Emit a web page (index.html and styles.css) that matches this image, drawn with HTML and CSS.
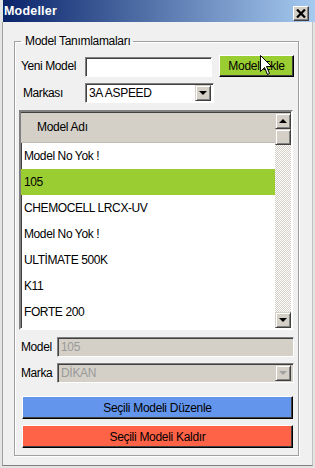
FILE: index.html
```html
<!DOCTYPE html>
<html lang="tr">
<head>
  <meta charset="UTF-8">
  <meta name="viewport" content="width=device-width, initial-scale=1.0">
  <title>Modeller</title>
  <link rel="stylesheet" href="styles.css">
</head>
<body>
  <div class="window">
    <div class="titlebar">
      <span class="title">Modeller</span>
      <span class="close-btn">
        <svg width="10" height="9" viewBox="0 0 10 9"><path d="M1 0.5 L9 8.5 M9 0.5 L1 8.5" stroke="#000" stroke-width="2.2"/></svg>
      </span>
    </div>

    <div class="client">
      <fieldset class="group">
        <legend>Model Tanımlamaları</legend>

        <div class="row row-new">
          <label class="lbl lbl-wide">Yeni Model</label>
          <input type="text" class="field field-new">
          <button class="btn btn-add">Model Ekle</button>
        </div>

        <div class="row row-brand">
          <label class="lbl lbl-wide lbl-indent">Markası</label>
          <div class="combo combo-brand">
            <span class="combo-text">3A ASPEED</span>
            <span class="combo-arrow"><span class="tri-down"></span></span>
          </div>
        </div>

        <!-- model listesi -->
        <div class="grid">
          <div class="grid-body">
            <div class="grid-head">Model Adı</div>
            <div class="grid-row">Model No Yok !</div>
            <div class="grid-row selected">105</div>
            <div class="grid-row">CHEMOCELL LRCX-UV</div>
            <div class="grid-row">Model No Yok !</div>
            <div class="grid-row">ULTİMATE 500K</div>
            <div class="grid-row">K11</div>
            <div class="grid-row">FORTE 200</div>
          </div>
          <div class="scrollbar">
            <span class="sb-btn"><span class="tri-up"></span></span>
            <span class="sb-btn"></span>
            <span class="sb-track"></span>
            <span class="sb-btn"><span class="tri-down"></span></span>
          </div>
        </div>

        <div class="row row-model">
          <label class="lbl lbl-short">Model</label>
          <div class="field field-disabled">105</div>
        </div>

        <div class="row row-marka">
          <label class="lbl lbl-short">Marka</label>
          <div class="combo combo-disabled">
            <span class="combo-text">DİKAN</span>
            <span class="combo-arrow"><span class="tri-down grey"></span></span>
          </div>
        </div>

        <button class="btn btn-wide btn-edit">Seçili Modeli Düzenle</button>
        <button class="btn btn-wide btn-remove">Seçili Modeli Kaldır</button>
      </fieldset>
    </div>

    <svg class="cursor" width="13" height="21" viewBox="0 0 13 21"><path d="M0.5 0.5 L0.5 16.5 L4.5 12.5 L7.5 19.5 L9.5 18.5 L6.5 11.5 L11.5 11.5 Z" fill="#fff" stroke="#000" stroke-width="1"/></svg>
  </div>
</body>
</html>
```

FILE: styles.css
```css
body {
  margin: 0;
  font-family: 'Liberation Sans', Arial, sans-serif;
  font-size: 12px;
  color: #000;
  background-color: #f0f0f0;
}
.window {
  position: relative;
  width: 315px;
  height: 468px;
  box-sizing: border-box;
  padding: 0 2px 2px 2px;
  background-color: #e4e4e4;
  display: flex;
  flex-direction: column;
}
.titlebar {
  height: 22px;
  display: flex;
  align-items: center;
  justify-content: space-between;
  padding: 0 6px 0 1px;
  margin: 0 -2px 0 1px;
  background: linear-gradient(to right, #0a246a, #a6caf0);
}
.title {
  color: #fff;
  font-weight: bold;
  font-size: 12.5px;
  letter-spacing: 0.2px;
}
.close-btn {
  width: 14px;
  height: 13px;
  margin-top: 4px;
  display: flex;
  align-items: center;
  justify-content: center;
  background-color: #d4d0c8;
  border: 1px solid;
  border-color: #fff #404040 #404040 #fff;
  box-shadow: inset -1px -1px #808080;
}
.client {
  flex: 1;
  background-color: #f0f0f0;
  border-left: 1px solid #a0a0a0;
  border-bottom: 1px solid #808080;
  border-right: 1px solid #c0c0c0;
  padding: 0 0 0 11px;
}
.group {
  width: 285px;
  box-sizing: border-box;
  margin: 12px 0 0 0;
  padding: 0 4px 7px 6px;
  border: 1px solid #a0a0a0;
  box-shadow: 1px 1px #fff, inset 1px 1px #fff;
}
.group legend {
  padding: 0 3px 0 4px;
  line-height: 14px;
  font-size: 12px;
  letter-spacing: -0.3px;
}
.row {
  display: flex;
  align-items: center;
  height: 20px;
}
.row-new {
  margin-top: 7px;
  height: 22px;
}
.row-brand {
  margin-top: 6px;
}
.row-model {
  margin-top: 7px;
}
.row-marka {
  margin-top: 6px;
}
.lbl {
  flex-shrink: 0;
  letter-spacing: -0.4px;
  white-space: nowrap;
}
.lbl-wide {
  width: 64px;
}
.lbl-indent {
  padding-left: 2px;
  width: 62px;
}
.lbl-short {
  width: 36px;
}
.field {
  box-sizing: border-box;
  height: 20px;
  margin: 0;
  padding: 0 3px;
  border: 1px solid;
  border-color: #808080 #fff #fff #808080;
  box-shadow: inset 1px 1px #404040;
  background-color: #fff;
  font-family: inherit;
  font-size: 12px;
}
.field-new {
  width: 127px;
  margin-top: 1px;
}
.field-disabled {
  flex: 1;
  display: flex;
  align-items: center;
  background-color: #d4d0c8;
  color: #9a9a9a;
  letter-spacing: -0.3px;
}
.combo {
  box-sizing: border-box;
  height: 20px;
  display: flex;
  align-items: center;
  border: 1px solid;
  border-color: #808080 #fff #fff #808080;
  box-shadow: inset 1px 1px #404040;
  background-color: #fff;
  padding: 2px 2px 2px 3px;
}
.combo-brand {
  width: 129px;
}
.combo-disabled {
  flex: 1;
  background-color: #d4d0c8;
  color: #9a9a9a;
}
.combo-text {
  flex: 1;
  letter-spacing: -0.3px;
}
.combo-arrow {
  box-sizing: border-box;
  width: 16px;
  height: 16px;
  display: flex;
  align-items: center;
  justify-content: center;
  background-color: #d4d0c8;
  border: 1px solid;
  border-color: #d4d0c8 #404040 #404040 #d4d0c8;
  box-shadow: inset 1px 1px #fff, inset -1px -1px #808080;
}
.tri-down {
  width: 0;
  height: 0;
  border-left: 4px solid transparent;
  border-right: 4px solid transparent;
  border-top: 4px solid #000;
}
.tri-down.grey {
  border-top-color: #a0a0a0;
}
.tri-up {
  width: 0;
  height: 0;
  border-left: 4px solid transparent;
  border-right: 4px solid transparent;
  border-bottom: 4px solid #000;
}
.btn {
  box-sizing: border-box;
  border: 1px solid;
  border-color: #fff #000 #000 #fff;
  box-shadow: inset -1px -1px #404040;
  font-family: inherit;
  font-size: 12px;
  letter-spacing: -0.3px;
  padding: 0;
  cursor: pointer;
}
.btn-add {
  width: 75px;
  height: 22px;
  margin-left: 7px;
  background-color: #9acd32;
}
.grid {
  display: flex;
  width: 274px;
  height: 220px;
  box-sizing: border-box;
  margin: 7px 0 0 -2px;
  border: 2px solid;
  border-color: #808080 #fff #fff #808080;
  box-shadow: inset 1px 1px #404040;
  background-color: #fff;
}
.grid-body {
  flex: 1;
  overflow: hidden;
  padding-top: 1px;
}
.grid-head {
  height: 29px;
  line-height: 29px;
  padding-left: 16px;
  background-color: #d4d0c8;
  border-bottom: 1px solid #c0bcb4;
  letter-spacing: -0.3px;
}
.grid-row {
  height: 26px;
  line-height: 26px;
  padding-left: 3px;
  letter-spacing: -0.4px;
  white-space: nowrap;
}
.grid-row.selected {
  background-color: #9acd32;
}
.scrollbar {
  width: 16px;
  display: flex;
  flex-direction: column;
  padding-top: 1px;
}
.sb-btn {
  box-sizing: border-box;
  width: 16px;
  height: 16px;
  display: flex;
  align-items: center;
  justify-content: center;
  background-color: #d4d0c8;
  border: 1px solid;
  border-color: #d4d0c8 #404040 #404040 #d4d0c8;
  box-shadow: inset 1px 1px #fff, inset -1px -1px #808080;
}
.sb-track {
  flex: 1;
  background-color: #f4f4f4;
  background-image: repeating-conic-gradient(#d4d0c8 0 25%, #fff 0 50%);
  background-size: 2px 2px;
}
.btn-wide {
  display: block;
  width: 271px;
  height: 23px;
  margin-left: 1px;
}
.btn-edit {
  margin-top: 13px;
  background-color: #6495ed;
}
.btn-remove {
  margin-top: 6px;
  background-color: #ff6347;
}
.cursor {
  position: absolute;
  left: 260px;
  top: 55px;
}
```
